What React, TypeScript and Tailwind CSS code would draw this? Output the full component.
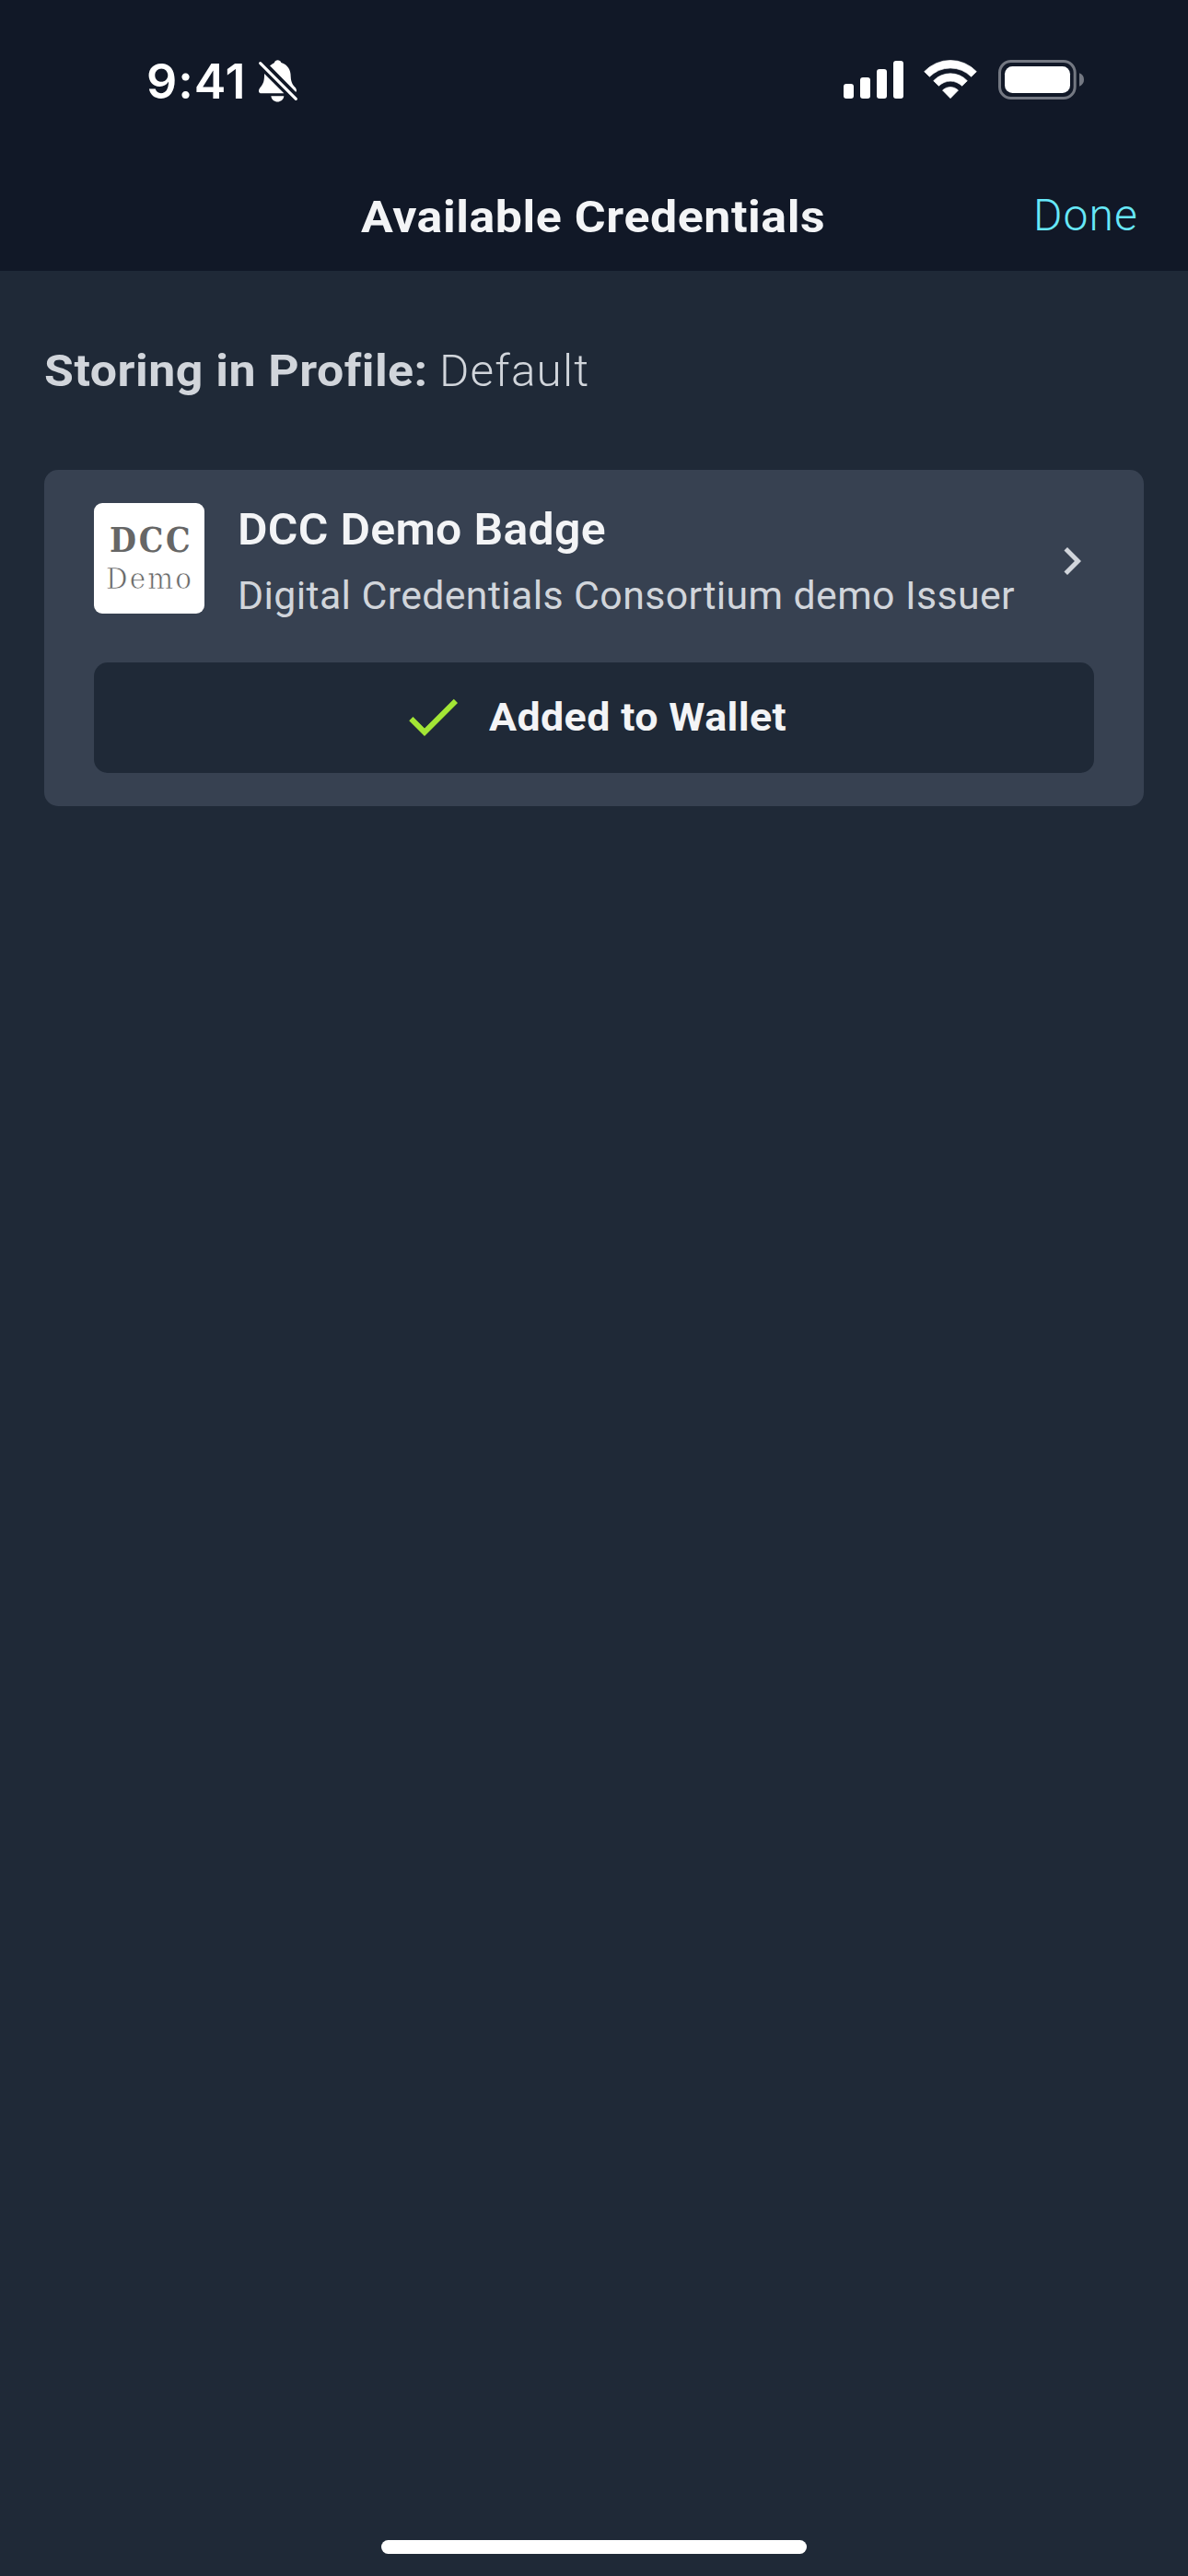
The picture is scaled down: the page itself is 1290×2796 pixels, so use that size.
import React from 'react';

function BellSlash() {
  return (
    <svg className="h-[52px] w-[46px]" viewBox="420 36 138 156" fill="#fff">
      <path d="M459 64 C464 60 470 57 474 54 C476 43 493 43 496 54 C518 61 527 78 527 98 C528 120 534 126 543 136 Q548 143 544 150 Z" />
      <path d="M441 90 L505 154 H431 C422 154 421 144 426 137 C436 126 441 117 441 96 Z" />
      <path d="M463 163 H505 C502 188 466 188 463 163 Z" />
      <path d="M428 56 L544 172" stroke="#fff" strokeWidth="9.5" strokeLinecap="round" />
    </svg>
  );
}

function SignalBars() {
  return (
    <div className="flex h-[41px] w-[65px] items-end justify-between">
      <span className="h-[16px] w-[11px] rounded-[3px] bg-white" />
      <span className="h-[23px] w-[11px] rounded-[3px] bg-white" />
      <span className="h-[32px] w-[11px] rounded-[3px] bg-white" />
      <span className="h-[41px] w-[11px] rounded-[3px] bg-white" />
    </div>
  );
}

function Wifi() {
  return (
    <svg className="h-[44px] w-[60px]" viewBox="307.5 42 180 132" fill="#fff" stroke="#fff" strokeWidth="2" strokeLinejoin="round">
      <path d="M312.5 83 A117 117 0 0 1 482.5 83 L465.5 100 A96 96 0 0 0 329.5 100 Z" />
      <path d="M342.5 113 A76 76 0 0 1 452.5 113 L435.5 130 A54 54 0 0 0 359.5 130 Z" />
      <path d="M372 144 A36 36 0 0 1 423 144 L397.5 170 Z" />
    </svg>
  );
}

function Battery() {
  return (
    <svg className="h-[45px] w-[95px]" viewBox="549 42 285 135">
      <rect x="556.5" y="49.5" width="245" height="120" rx="37" fill="none" stroke="#747882" strokeWidth="9" />
      <rect x="573" y="66" width="213" height="87" rx="25" fill="#fff" />
      <path d="M816 88 Q831 94 831 109.500 Q831 125 816 131 Z" fill="#747882" />
    </svg>
  );
}

function StatusBar() {
  return (
    <div className="flex h-[174px] items-start justify-between pl-[159px] pr-[112px]">
      <div className="flex items-start">
        <span className="mt-[58px] w-[121px] font-['Inter',sans-serif] text-[52px] font-semibold leading-[62px] tracking-[0.9px] text-white">
          9:41
        </span>
        <span className="mt-[62px]">
          <BellSlash />
        </span>
      </div>
      <div className="mt-[64px] flex items-start">
        <span className="mt-[2px]">
          <SignalBars />
        </span>
        <span className="ml-[21px]">
          <Wifi />
        </span>
        <span className="ml-[21px]">
          <Battery />
        </span>
      </div>
    </div>
  );
}

function NavBar() {
  return (
    <div className="grid h-[120px] grid-cols-[1fr_504px_1fr] items-start pt-[31px]">
      <span />
      <h1 className="ml-[-1.5px] mt-[2px] origin-left scale-x-[1.08] whitespace-nowrap text-[48px] font-[750] leading-[57px] tracking-[0.530px] text-gray-100">
        Available Credentials
      </h1>
      <button className="justify-self-end whitespace-nowrap pr-[54px] text-right text-[48px] font-[360] leading-[57px] tracking-[1.1px] text-[#67e8f9]">
        Done
      </button>
    </div>
  );
}

function IssuerLogo() {
  return (
    <div className="flex h-[120px] w-[120px] shrink-0 flex-col items-start rounded-[9px] bg-white font-['DejaVu_Serif',serif] text-[#666]">
      <span className="ml-[17px] mt-[18px] origin-left scale-x-[0.88] text-[38px] font-bold leading-[44px] tracking-[3px]">DCC</span>
      <span className="ml-[13px] mt-[1px] origin-left scale-x-[0.92] text-[32px] leading-[38px] tracking-[2.3px] [-webkit-text-stroke:0.7px_white]">Demo</span>
    </div>
  );
}

function CredentialCard() {
  return (
    <section className="mt-[79px] h-[365px] rounded-[15px] bg-[#374151] px-[54px] pt-[36px]">
      <div className="flex h-[120px] items-start">
        <IssuerLogo />
        <div className="ml-[36px] min-w-0 flex-1 whitespace-nowrap">
          <div className="origin-left scale-x-[1.04] text-[48px] font-[560] leading-[57px] tracking-[0.3px] text-gray-100">
            DCC Demo Badge
          </div>
          <div className="mt-[19px] origin-left scale-x-[1.02] text-[42px] leading-[49px] tracking-[0.370px] text-[#d1d5db]">
            Digital Credentials Consortium demo Issuer
          </div>
        </div>
        <svg className="-mr-[6px] mt-[33px] h-[60px] w-[60px] shrink-0" viewBox="0 0 24 24" fill="#d1d5db">
          <path d="M10 6L8.590 7.410 13.170 12l-4.580 4.590L10 18l6-6z" />
        </svg>
      </div>
      <div className="mt-[53px] flex h-[120px] items-start rounded-[15px] bg-[#1f2937] pl-[332px]">
        <svg className="mt-[23px] h-[72px] w-[72px] shrink-0" viewBox="0 0 24 24" fill="#a3e635">
          <path d="M9 16.170L4.830 12l-1.420 1.410L9 19 21 7l-1.410-1.410z" />
        </svg>
        <span className="ml-[25px] mt-[35px] origin-left scale-x-[1.065] whitespace-nowrap text-[42px] font-[750] leading-[49px] tracking-[0.370px] text-gray-100">
          Added to Wallet
        </span>
      </div>
    </section>
  );
}

export default function App() {
  return (
    <div className="flex h-[2796px] w-[1290px] flex-col overflow-hidden bg-[#1f2937] font-['Roboto',sans-serif]">
      <header className="h-[294px] shrink-0 bg-[#111827]">
        <StatusBar />
        <NavBar />
      </header>
      <main className="flex-1 px-[48px] pt-[80px]">
        <div className="flex whitespace-nowrap text-[48px] leading-[57px] text-[#d1d5db]">
          <span className="w-[429px]">
            <span className="inline-block origin-left scale-x-[1.080] font-[750] tracking-[0.450px]">Storing in Profile:</span>
          </span>
          <span className="origin-left scale-x-[1.03] font-[360] tracking-[1.150px]">Default</span>
        </div>
        <CredentialCard />
      </main>
      <footer className="flex h-[39px] shrink-0 justify-center">
        <span className="h-[15px] w-[462px] rounded-full bg-white" />
      </footer>
    </div>
  );
}
